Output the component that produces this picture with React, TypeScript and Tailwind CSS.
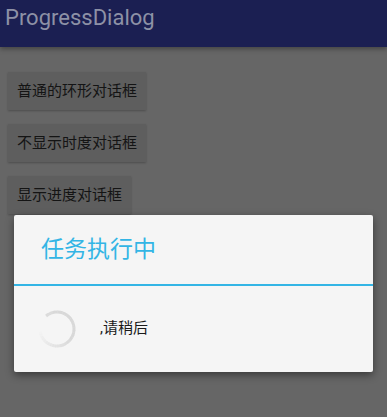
import React from 'react';

const cjk = "font-['Roboto','Noto_Sans_CJK_SC',sans-serif]";

// Holo-style spinner: ring split into segments that fade out toward the tail
function Spinner() {
  const cx = 19;
  const cy = 19;
  const r = 17;
  const segs = 36;
  const start = -130; // degrees, head of the arc
  const sweep = 300;
  const items = Array.from({ length: segs }, (_, i) => {
    const a0 = ((start + (sweep * i) / segs) * Math.PI) / 180;
    const a1 = ((start + (sweep * (i + 1)) / segs + 1) * Math.PI) / 180;
    const x0 = cx + r * Math.cos(a0);
    const y0 = cy + r * Math.sin(a0);
    const x1 = cx + r * Math.cos(a1);
    const y1 = cy + r * Math.sin(a1);
    const t = i / (segs - 1);
    const op = i < 3 ? 0.9 : 1 - Math.max(0, t - 0.55) * 2.1;
    return { d: `M${x0} ${y0} A${r} ${r} 0 0 1 ${x1} ${y1}`, op: Math.max(0.05, op) };
  });
  return (
    <svg width="38" height="38" viewBox="0 0 38 38" className="shrink-0">
      {items.map((s, i) => (
        <path key={i} d={s.d} stroke="#d8d8d8" strokeWidth="3" fill="none" opacity={s.op} />
      ))}
    </svg>
  );
}

export default function App() {
  const buttons = [
    { label: '普通的环形对话框', w: 'w-[138px]' },
    { label: '不显示时度对话框', w: 'w-[138px]' },
    { label: '显示进度对话框', w: 'w-[123px]' },
  ];

  return (
    <div className={`relative w-[387px] h-[417px] overflow-hidden bg-[#666666] ${cjk}`}>
      <div className="h-[47px] bg-[#1b1f52] flex items-center pl-[5px] shadow-[0_2px_5px_rgba(0,0,0,0.35)]">
        <span className="text-[22px] text-[#8d91a6] font-['Roboto',sans-serif] leading-none -mt-[11px]">
          ProgressDialog
        </span>
      </div>

      <div className="flex flex-col gap-[14px] pl-[8px] pt-[25px]">
        {buttons.map((b) => (
          <div
            key={b.label}
            className={`${b.w} h-[38px] bg-[#5e5e5e] flex items-center pl-[9px] text-[15px] text-[#141414] shadow-[0_1px_2px_rgba(0,0,0,0.25)]`}
          >
            {b.label}
          </div>
        ))}
      </div>

      {/* dialog */}
      <div className="absolute left-[14px] top-[215px] w-[359px] h-[157px] bg-[#f5f5f5] rounded-[2px] shadow-[0_3px_8px_rgba(0,0,0,0.45)] flex flex-col">
        <div className="h-[69px] flex items-center pl-[27px] text-[23px] text-[#33b5e5] pt-[2px]">
          任务执行中
        </div>
        <div className="h-[2px] bg-[#33b5e5]" />
        <div className="flex-1 flex items-center pl-[24px] gap-[24px] pb-[1px]">
          <Spinner />
          <span className="text-[15px] text-[#1a1a1a]">,请稍后</span>
        </div>
      </div>
    </div>
  );
}
